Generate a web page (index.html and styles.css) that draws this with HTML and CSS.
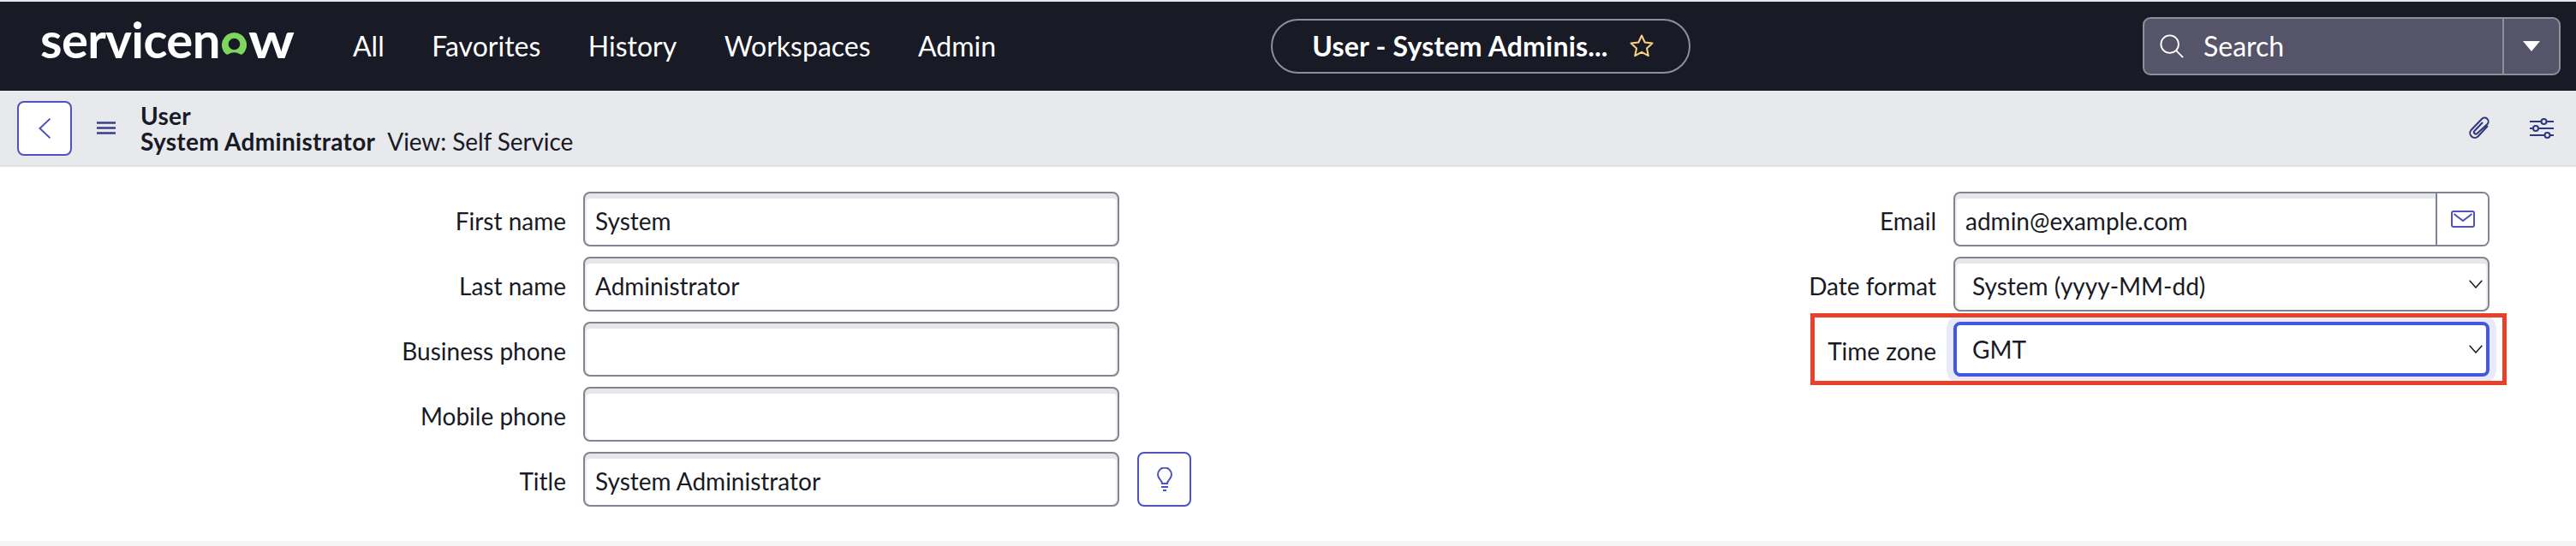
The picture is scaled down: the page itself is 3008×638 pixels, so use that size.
FILE: index.html
```html
<!DOCTYPE html>
<html lang="en">
<head>
  <meta charset="UTF-8" />
  <title>User - System Administrator</title>
  <link rel="stylesheet" href="styles.css">
</head>
<body>

  <header class="navbar">
    <div class="logo">servicen<svg class="logo-o" viewBox="0 0 32 32" aria-hidden="true"><path fill="#7fd65c" fill-rule="evenodd" d="M16 1a15 15 0 0 0-10.300 25.900c1 .9 2.300 1 3.400.3 2-1.400 4.400-2.200 6.900-2.200s4.900.8 6.900 2.200c1.100.7 2.400.6 3.400-.3A15 15 0 0 0 16 1zm0 21a7 7 0 1 1 0-14 7 7 0 0 1 0 14z"/></svg><span class="logo-w">w</span></div>
    <nav class="nav-links">
      <a href="#">All</a>
      <a href="#">Favorites</a>
      <a href="#">History</a>
      <a href="#">Workspaces</a>
      <a href="#">Admin</a>
    </nav>
    <div class="context-pill">
      <span class="context-text">User - System Adminis...</span>
      <svg class="star" viewBox="0 0 30 30" aria-hidden="true"><path d="M15 2.500l3.700 8 8.800 1-6.500 6 1.800 8.700-7.800-4.400-7.800 4.400 1.800-8.700-6.500-6 8.800-1z"/></svg>
    </div>
    <div class="search-box">
      <div class="search-main">
        <svg class="search-icon" viewBox="0 0 30 30" aria-hidden="true"><circle cx="12.500" cy="12.500" r="11"/><path d="M20.500 20.500l8.500 8.500"/></svg>
        <span class="search-text">Search</span>
      </div>
      <div class="search-caret"><span class="caret"></span></div>
    </div>
  </header>

  <div class="subheader">
    <button class="icon-btn back-btn"><svg viewBox="0 0 14 24" aria-hidden="true"><path d="M13.500 .7L1.500 12l12 11.300"/></svg></button>
    <svg class="menu-icon" viewBox="0 0 22 15" aria-hidden="true"><path d="M0 1.500h22M0 7.500h22M0 13.500h22"/></svg>
    <div class="record-title">
      <div class="record-type">User</div>
      <div><span class="record-type">System Administrator</span><span class="record-view">View: Self Service</span></div>
    </div>
    <div class="subheader-actions">
      <svg class="clip-icon" viewBox="0 0 25 27" aria-hidden="true"><path d="M22 11L10.500 23.500a5.500 5.500 0 0 1-8-7.500L15 3a4.400 4.400 0 0 1 6.500 6L9.500 20a2 2 0 0 1-3-3L16 7"/></svg>
      <svg class="sliders-icon" viewBox="0 0 28 24" aria-hidden="true"><path d="M0 4h13.500M19.500 4H28M0 12h4M10 12h18M0 20h17.500M23.500 20H28"/><circle cx="16.500" cy="4" r="3"/><circle cx="7" cy="12" r="3"/><circle cx="20.500" cy="20" r="3"/></svg>
    </div>
  </div>

  <main class="form-area">
    <section class="form-col form-left">
      <div class="form-row"><label>First name</label><div class="control">System</div></div>
      <div class="form-row"><label>Last name</label><div class="control">Administrator</div></div>
      <div class="form-row"><label>Business phone</label><div class="control"></div></div>
      <div class="form-row"><label>Mobile phone</label><div class="control"></div></div>
      <div class="form-row">
        <label>Title</label><div class="control">System Administrator</div>
        <button class="icon-btn bulb-btn"><svg viewBox="0 0 18 28" aria-hidden="true"><path d="M6 19c0-3.500-5-5.500-5-10.500a8 8 0 0 1 16 0c0 5-5 7-5 10.500zM5 23h8M7 27h4"/></svg></button>
      </div>
    </section>
    <section class="form-col form-right">
      <div class="form-row">
        <label>Email</label>
        <div class="control control-group">
          <span class="group-value">admin@example.com</span>
          <span class="group-addon"><svg viewBox="0 0 28 20" aria-hidden="true"><rect x="1" y="1" width="26" height="18" rx="2"/><path d="M3.500 4l10.500 8 10.500-8"/></svg></span>
        </div>
      </div>
      <div class="form-row">
        <label>Date format</label>
        <div class="control select">System (yyyy-MM-dd)<svg class="chevron" viewBox="0 0 16 10" aria-hidden="true"><path d="M.7 .8L8 9 15.300 .8"/></svg></div>
      </div>
      <div class="form-row">
        <label>Time zone</label>
        <div class="control select select-focus">GMT<svg class="chevron" viewBox="0 0 16 10" aria-hidden="true"><path d="M.7 .8L8 9 15.300 .8"/></svg></div>
        <span class="annotation"></span>
      </div>
    </section>
  </main>

  <div class="page-bottom"></div>

</body>
</html>
```

FILE: styles.css
```css
* { margin: 0; padding: 0; box-sizing: border-box; }

html, body { height: 100%; }

body {
  display: flex; flex-direction: column;
  background: #fff;
  color: #181a26;
  font-family: 'Lato', sans-serif;
  font-size: 28px;
  border-top: 2px solid #e6e6e8;
  overflow: hidden;
}

/* top bar */
.navbar {
  display: flex; align-items: center;
  height: 104px; flex-shrink: 0;
  background: #181a26;
  color: #fff;
  position: relative;
}

.logo {
  display: flex; align-items: baseline;
  margin-left: 47px; width: 298px; flex-shrink: 0;
  font-size: 58px; font-weight: 700;
  letter-spacing: -.6px;
  line-height: 1;
  margin-top: -16px;
}
.logo-o { flex-shrink: 0; width: 31px; height: 31px; margin: 0 1px; align-self: flex-end; margin-bottom: 7px; }
.logo-w { display: inline-block; transform: scaleX(1.16); transform-origin: left; }

.nav-links { display: flex; gap: 55.5px; margin-left: 67px; margin-bottom: 2px; }
.nav-links a { color: #fff; text-decoration: none; font-size: 32px; }

.context-pill {
  display: flex; align-items: center;
  width: 490px; height: 64px;
  margin-left: 321px;
  border: 2px solid #8e8f98; border-radius: 32px;
  padding-left: 46px;
}
.context-text { font-size: 32px; font-weight: 700; letter-spacing: .2px; width: 344px; white-space: nowrap; margin-bottom: 2px; }
.star { width: 30px; height: 30px; margin-left: 26px; }
.star path { fill: none; stroke: #fbd47e; stroke-width: 2; stroke-linejoin: round; }

.search-box {
  display: flex;
  width: 488px; height: 68px;
  margin-left: auto; margin-right: 18px;
  background: #555468;
  border: 2px solid #8e8f98; border-radius: 9px;
}
.search-main {
  display: flex; align-items: center; gap: 23px;
  flex: 1; padding-left: 18px;
  font-size: 32px;
}
.search-text { margin-bottom: 2px; }
.search-icon { width: 28px; height: 28px; }
.search-icon circle, .search-icon path { fill: none; stroke: #fff; stroke-width: 2; }
.search-caret {
  display: flex; align-items: center; justify-content: center;
  width: 66px;
  border-left: 2px solid #8e8f98;
}
.caret {
  border-left: 10px solid transparent;
  border-right: 10px solid transparent;
  border-top: 12px solid #fff;
}

/* record header */
.subheader {
  display: flex; align-items: center;
  height: 89px; flex-shrink: 0;
  background: #e8e9ed;
  border-bottom: 2px solid #e2e3e6;
  padding-left: 20px;
}
.icon-btn {
  display: flex; align-items: center; justify-content: center;
  background: #fff;
  border: 2px solid #4f52bd; border-radius: 8px;
}
.icon-btn svg { fill: none; stroke: #4f52bd; stroke-width: 2; }
.back-btn { width: 64px; height: 64px; }
.back-btn svg { width: 14px; height: 24px; }
.menu-icon { width: 22px; height: 15px; margin-left: 29px; }
.menu-icon path { fill: none; stroke: #3b3f8f; stroke-width: 2.500; }
.record-title { margin-left: 29px; line-height: 30px; }
.record-type { font-weight: 700; letter-spacing: .3px; }
.record-view { margin-left: 14px; letter-spacing: -.1px; }
.subheader-actions { display: flex; align-items: center; gap: 46px; margin-left: auto; margin-right: 26px; }
.clip-icon { width: 25px; height: 27px; }
.sliders-icon { width: 28px; height: 24px; }
.clip-icon path, .sliders-icon path, .sliders-icon circle { fill: none; stroke: #303680; stroke-width: 2; }

/* form */
.form-area {
  display: flex; flex: 1;
  padding-top: 29px;
}
.form-col { display: flex; flex-direction: column; gap: 12px; }
.form-left { width: 1504px; }
.form-right { width: 1504px; }

.form-row { display: flex; align-items: center; gap: 20px; position: relative; }
.form-row label { text-align: right; padding-top: 3px; }
.form-left label { width: 661px; }
.form-right label { width: 757px; }

.control {
  display: flex; align-items: center;
  width: 626px; height: 64px;
  padding: 4px 12px 0;
  background: #fff;
  border: 2px solid #7f8490; border-radius: 8px;
  box-shadow: inset 0 6px 0 #e6e8e8, inset 2px 0 0 #eef0f0, inset -2px 0 0 #eef0f0;
  white-space: nowrap;
}
.control-group { padding: 0; position: relative; }
.group-value { flex: 1; padding: 4px 12px 0; }
.group-addon {
  display: flex; align-items: center; justify-content: center;
  width: 61px; height: 100%;
  background: #fff;
  border-left: 2px solid #7f8490;
  border-radius: 0 6px 6px 0;
}
.group-addon svg { width: 28px; height: 20px; fill: none; stroke: #4f52bd; stroke-width: 2; }

.select { justify-content: space-between; padding: 4px 6px 0 20px; }
.chevron { width: 16px; height: 10px; margin-top: -4px; fill: none; stroke: #181a26; stroke-width: 1.500; }
.select-focus {
  padding-top: 0;
  border: 4px solid #4158e0;
  box-shadow: 0 0 0 8px #e8eafa;
  padding-left: 18px; padding-right: 4px;
}
.select-focus .chevron { margin-top: 0; }

.bulb-btn { width: 63px; height: 64px; margin-left: 1px; }
.bulb-btn svg { width: 18px; height: 28px; }

/* red annotation box round the time zone row */
.annotation {
  position: absolute;
  left: 610px; top: -10px;
  width: 813px; height: 84px;
  border: 5px solid #e8412a;
  pointer-events: none;
}

.page-bottom { height: 6px; flex-shrink: 0; background: #f4f5f7; }
```
